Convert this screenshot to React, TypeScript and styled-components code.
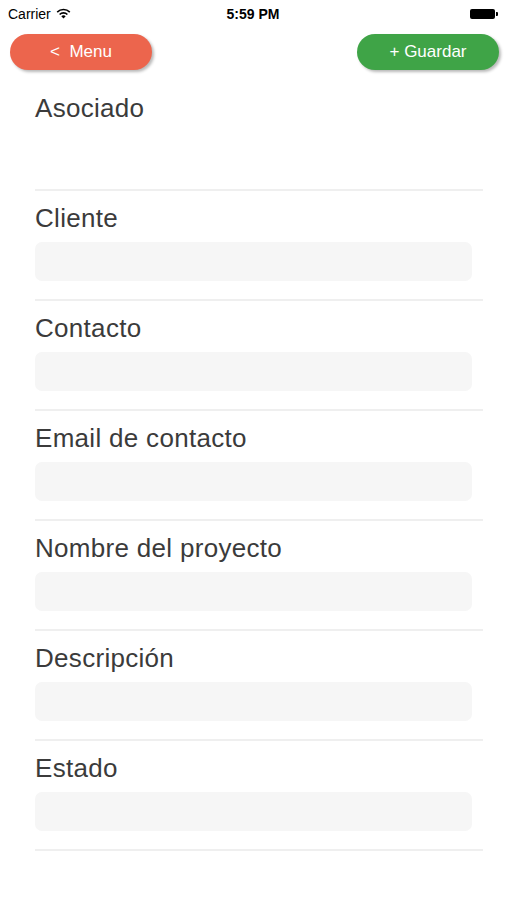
import styled, { createGlobalStyle } from 'styled-components';

const GlobalStyle = createGlobalStyle`
  html, body {
    margin: 0;
    padding: 0;
    background: #ffffff;
  }
  body {
    font-family: 'Liberation Sans', Arial, sans-serif;
  }
`;

const Screen = styled.div`
  width: 507px;
  height: 900px;
  background: #fff;
  overflow: hidden;
`;

const StatusBar = styled.div`
  height: 27px;
  display: grid;
  grid-template-columns: 1fr auto 1fr;
  align-items: center;
  padding: 0 9px 0 8px;
  font-size: 14px;
  color: #000;
`;

const Carrier = styled.div`
  display: flex;
  align-items: center;
  gap: 5px;
`;

const Clock = styled.div`
  font-weight: 700;
  font-size: 14px;
`;

const Battery = styled.div`
  justify-self: end;
  display: flex;
  align-items: center;
  gap: 1px;
`;

const BatteryBody = styled.div`
  width: 25px;
  height: 10px;
  background: #000;
  border-radius: 2px;
`;

const BatteryTip = styled.div`
  width: 2px;
  height: 4px;
  background: #000;
  border-radius: 0 1px 1px 0;
`;

const Toolbar = styled.div`
  display: flex;
  justify-content: space-between;
  padding: 7px 8px 0 10px;
  height: 43px;
  box-sizing: border-box;
`;

const PillButton = styled.button<{ tone: 'red' | 'green' }>`
  width: 142px;
  height: 36px;
  border: none;
  border-radius: 18px;
  background: ${({ tone }) => (tone === 'red' ? '#ec654d' : '#3fa447')};
  color: #fff;
  font-family: 'Liberation Sans', Arial, sans-serif;
  font-size: 17px;
  box-shadow: 2px 2px 3px rgba(0, 0, 0, 0.28);
  display: flex;
  align-items: center;
  justify-content: center;
  white-space: pre;
  cursor: pointer;
`;

const Form = styled.div`
  padding: 11px 24px 0 35px;
`;

const Field = styled.div`
  height: 110px;
  box-sizing: border-box;
  border-bottom: 2px solid #efefef;
  padding-top: 13px;
  display: flex;
  flex-direction: column;
`;

const Label = styled.div`
  font-size: 26px;
  line-height: 28px;
  letter-spacing: 0.3px;
  color: #3b3b3b;
`;

const Input = styled.div<{ empty?: boolean }>`
  margin-top: 10px;
  width: 437px;
  height: 39px;
  border-radius: 7px;
  background: ${({ empty }) => (empty ? 'transparent' : '#f6f6f6')};
`;

const WifiIcon = () => (
  <svg width="15" height="11" viewBox="0 0 15 11">
    <path d="M7.5 10.5 L5.3 8.2 A3.2 3.2 0 0 1 9.7 8.2 Z" fill="#000" />
    <path d="M3.6 6.5 A5.6 5.6 0 0 1 11.4 6.5" stroke="#000" strokeWidth="1.6" fill="none" />
    <path d="M1.2 4.1 A9 9 0 0 1 13.8 4.1" stroke="#000" strokeWidth="1.6" fill="none" />
  </svg>
);

const fields = [
  { label: 'Asociado', empty: true },
  { label: 'Cliente' },
  { label: 'Contacto' },
  { label: 'Email de contacto' },
  { label: 'Nombre del proyecto' },
  { label: 'Descripción' },
  { label: 'Estado' },
];

const App = () => {
  return (
    <Screen>
      <GlobalStyle />
      <StatusBar>
        <Carrier>
          Carrier <WifiIcon />
        </Carrier>
        <Clock>5:59 PM</Clock>
        <Battery>
          <BatteryBody />
          <BatteryTip />
        </Battery>
      </StatusBar>
      <Toolbar>
        <PillButton tone="red">{'<  Menu'}</PillButton>
        <PillButton tone="green">+ Guardar</PillButton>
      </Toolbar>
      <Form>
        {fields.map((f) => (
          <Field key={f.label}>
            <Label>{f.label}</Label>
            <Input empty={f.empty} />
          </Field>
        ))}
      </Form>
    </Screen>
  );
};

export default App;
